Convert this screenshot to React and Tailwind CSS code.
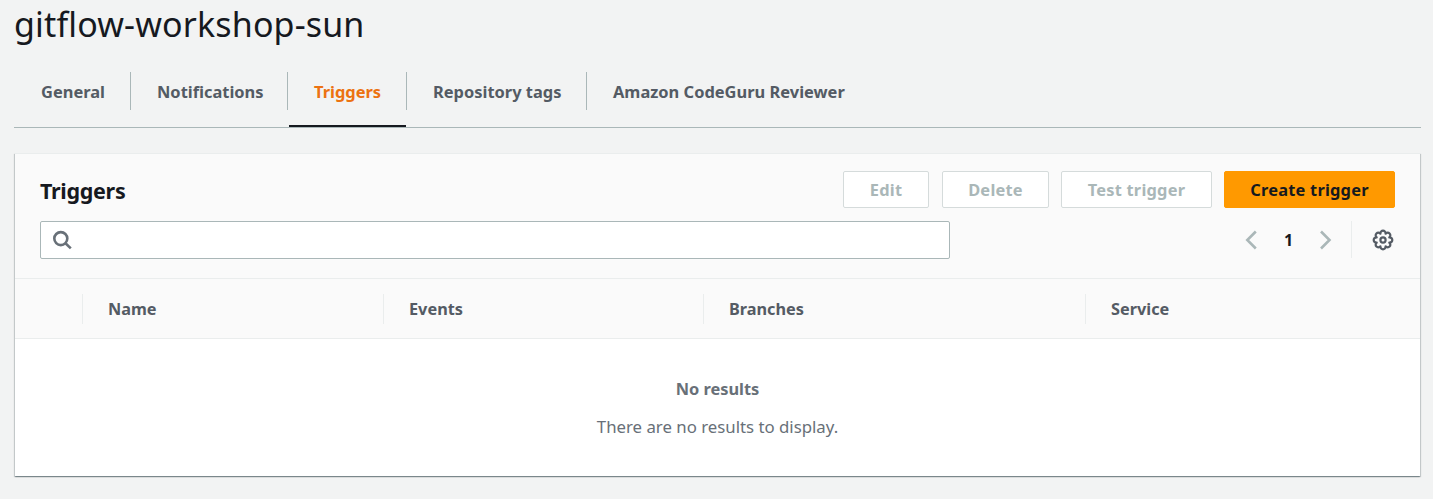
import React from "react";

const tabs = [
  { label: "General", box: "w-[117px] pl-[27px]" },
  { label: "Notifications", box: "w-[157px] pl-[26px]" },
  { label: "Triggers", box: "w-[119px] pl-[26px]", active: true },
  { label: "Repository tags", box: "w-[180px] pl-[26px]" },
  { label: "Amazon CodeGuru Reviewer", box: "w-[280px] pl-[26px]", last: true },
];

const columns = [
  { label: "Name", box: "w-[301px]" },
  { label: "Events", box: "w-[320px]" },
  { label: "Branches", box: "w-[382px]" },
  { label: "Service", box: "flex-1", last: true },
];

function Tab({ label, box, active, last }) {
  return (
    <li className={`relative flex h-[38px] items-center ${box} ${last ? "" : "border-r border-[#aab7b8]"}`}>
      <span className={`pt-[2px] whitespace-nowrap ${active ? "text-[#ec7211]" : "text-[#545b64]"}`}>{label}</span>
      {active && <span className="absolute top-[53px] left-px h-[2px] w-[117px] bg-[#16191f]" />}
    </li>
  );
}

function Button({ children, className }) {
  return (
    <button
      className={`flex h-[37px] items-center justify-center rounded-[2px] border pt-[2px] text-[16.4px] font-bold tracking-[0.22px] whitespace-nowrap ${className}`}
    >
      {children}
    </button>
  );
}

function GearIcon() {
  return (
    <svg className="h-[22px] w-[22px]" viewBox="-11 -11 22 22" fill="none" stroke="#545b64" strokeWidth="2.2" strokeLinejoin="round">
      <path d="M6.3-2.6C10.3-2.8 10.3 2.8 6.3 2.6C9.26 5.3 5.3 9.26 2.6 6.3C2.8 10.3-2.8 10.3-2.6 6.3C-5.3 9.26-9.26 5.3-6.3 2.6C-10.3 2.8-10.3-2.8-6.3-2.6C-9.26-5.3-5.3-9.26-2.6-6.3C-2.8-10.3 2.8-10.3 2.6-6.3C5.3-9.26 9.26-5.3 6.3-2.6Z" />
      <circle r="2.6" />
    </svg>
  );
}

function Chevron({ d }) {
  return (
    <svg className="h-5 w-3" viewBox="0 0 12 20" fill="none" stroke="#aab7b8" strokeWidth="2.6">
      <path d={d} />
    </svg>
  );
}

export default function App() {
  return (
    <div className="h-[499px] w-[1433px] overflow-hidden bg-[#f2f3f3] pr-[12px] pl-[14px] font-['Noto_Sans','Open_Sans',sans-serif] text-[16px] text-[#16191f]">
      <h1 className="flex h-[48px] items-center text-[34px] leading-[48px] tracking-[0.15px]">gitflow-workshop-sun</h1>

      <ul className="flex h-[80px] w-[1407px] border-b border-[#aab7b8] pt-[24px] text-[16.45px] font-bold">
        {tabs.map((t) => (
          <Tab key={t.label} {...t} />
        ))}
      </ul>

      <section className="mt-[25px] ml-px h-[323px] w-[1405px] border-t border-[#eaeded] bg-white shadow-[0_1px_1px_0_rgba(0,28,36,0.3),1px_1px_1px_0_rgba(0,28,36,0.15),-1px_1px_1px_0_rgba(0,28,36,0.15)]">
        <header className="h-[125px] border-b border-[#eaeded] bg-[#fafafa] pt-[17px] pr-[25px] pl-[25px]">
          <div className="flex h-[37px] items-center">
            <h2 className="flex-1 pt-[4px] text-[21.5px] font-bold tracking-[-0.3px]">Triggers</h2>
            <Button className="mr-[13px] w-[86px] border-[#d5dbdb] bg-white text-[#aab7b8]">Edit</Button>
            <Button className="mr-[12px] w-[107px] border-[#d5dbdb] bg-white text-[#aab7b8]">Delete</Button>
            <Button className="mr-[12px] w-[151px] border-[#d5dbdb] bg-white text-[#aab7b8]">Test trigger</Button>
            <Button className="w-[171px] border-[#ff9900] bg-[#ff9900] text-[#16191f]">Create trigger</Button>
          </div>

          <div className="mt-[13px] flex h-[38px]">
            <div className="flex w-[910px] items-center rounded-[2px] border border-[#aab7b8] bg-white pl-[11px]">
              <svg className="h-5 w-5" viewBox="0 0 20 20" fill="none" stroke="#687078" strokeWidth="2.6">
                <circle cx="8.8" cy="8.6" r="6.5" />
                <path d="M13.2 13 18.8 18.4" />
              </svg>
            </div>
            <div className="ml-auto flex h-[37px] items-center">
              <Chevron d="M10.8 1.5 2.3 10l8.5 8.5" />
              <span className="w-[63px] text-center font-bold">1</span>
              <Chevron d="M1 1.5 9.5 10l-8.5 8.5" />
              <span className="ml-[19px] h-[37px] w-px bg-[#eaeded]" />
              <span className="ml-[20px]">
                <GearIcon />
              </span>
              <span className="w-px" />
            </div>
          </div>
        </header>

        <div className="flex h-[60px] items-center border-b border-[#eaeded] bg-[#fafafa] text-[16.3px] font-bold text-[#545b64]">
          <span className="h-[30px] w-[68px] border-r border-[#eaeded]" />
          {columns.map((c) => (
            <span key={c.label} className={`flex h-[30px] items-center pt-[2px] pl-[25px] ${c.box} ${c.last ? "" : "border-r border-[#eaeded]"}`}>
              {c.label}
            </span>
          ))}
        </div>

        <div className="flex flex-col items-center pt-[36px] text-[#687078]">
          <p className="h-[28px] text-[16.4px] leading-[28px] font-bold">No results</p>
          <p className="mt-[10px] h-[28px] text-[16.8px] leading-[28px]">There are no results to display.</p>
        </div>
      </section>
    </div>
  );
}
